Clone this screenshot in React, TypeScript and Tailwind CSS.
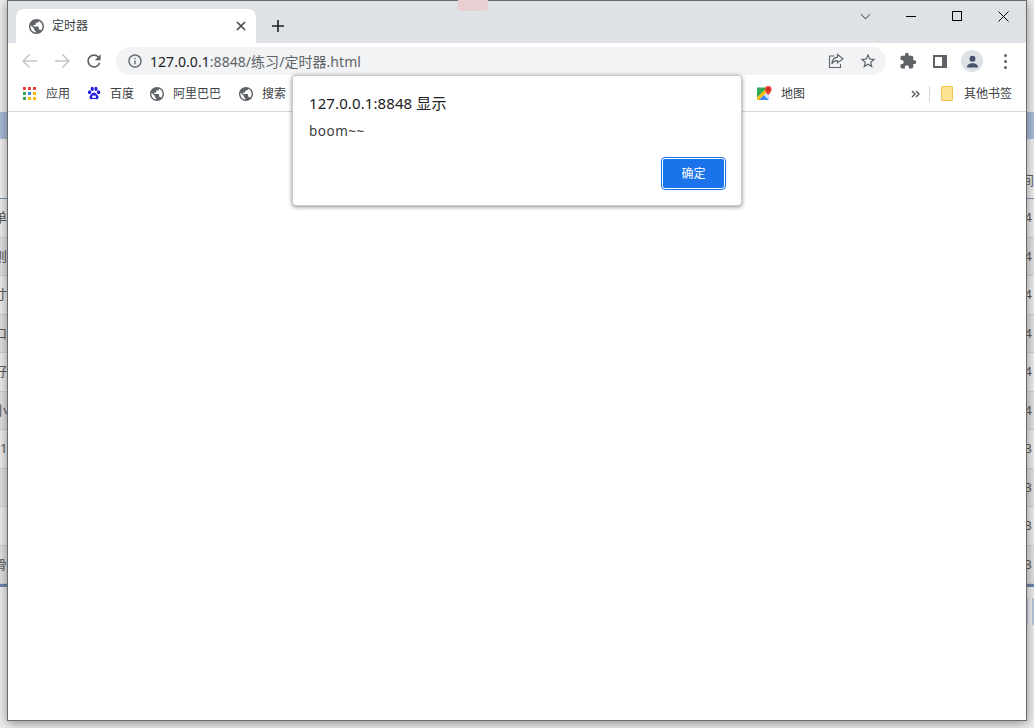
import type { ReactNode } from "react";

const fontStack = "font-['Noto_Sans','Noto_Sans_CJK_SC',sans-serif]";

const rows = [
  { left: "单", right: "4" },
  { left: "则", right: "4" },
  { left: "寸", right: "4" },
  { left: "口", right: "4" },
  { left: "好", right: "4" },
  { left: "小", right: "4" },
  { left: "1", right: "3" },
  { left: "", right: "3" },
  { left: "", right: "3" },
  { left: "骨", right: "3" },
];

function Globe({ className }: { className?: string }) {
  return (
    <svg viewBox="2 2 20 20" className={className} fill="#5f6368">
      <path d="M12 2C6.48 2 2 6.48 2 12s4.48 10 10 10 10-4.48 10-10S17.52 2 12 2zm-1 17.93c-3.95-.49-7-3.85-7-7.93 0-.62.08-1.21.21-1.79L9 15v1c0 1.1.9 2 2 2v1.93zm6.9-2.54c-.26-.81-1-1.39-1.9-1.39h-1v-3c0-.55-.45-1-1-1H8v-2h2c.55 0 1-.45 1-1V7h2c1.1 0 2-.9 2-2v-.41c2.93 1.19 5 4.06 5 7.41 0 2.08-.8 3.97-2.1 5.39z" />
    </svg>
  );
}

function AppsIcon() {
  const colors = ["#ea4335", "#ea4335", "#ea4335", "#34a853", "#4285f4", "#fbbc05", "#34a853", "#fbbc05", "#fbbc05"];
  return (
    <span className="grid grid-cols-3 gap-[2px] w-[13px] h-[13px]">
      {colors.map((c, i) => (
        <span key={i} className="w-[3px] h-[3px]" style={{ backgroundColor: c }} />
      ))}
    </span>
  );
}

function BaiduIcon() {
  return (
    <svg viewBox="0 0 16 16" className="w-[14px] h-[15px]" fill="#2319dc">
      <ellipse cx="3" cy="6.5" rx="1.9" ry="2.3" />
      <ellipse cx="6" cy="2.8" rx="1.8" ry="2.4" />
      <ellipse cx="10.2" cy="2.8" rx="1.8" ry="2.4" />
      <ellipse cx="13.2" cy="6.5" rx="1.9" ry="2.3" />
      <path d="M8 6.8c-2 0-2.6 1.8-3.8 3-1.3 1.2-1.6 2.2-1.2 3.3.5 1.3 1.8 1.6 3 1.3 1.4-.3 2.6-.3 4 0 1.2.3 2.5 0 3-1.3.4-1.1.1-2.1-1.2-3.3C10.6 8.6 10 6.8 8 6.8z" />
      <rect x="5.8" y="10.2" width="4.4" height="3" rx="1.2" fill="#fff" />
    </svg>
  );
}

function MapsIcon() {
  return (
    <svg viewBox="0 0 16 16" className="w-[15px] h-[15px]">
      <path d="M0 1.5h11L0 12.5z" fill="#34a853" />
      <path d="M0 12.5 11 1.5h1.5v3L2 15H0z" fill="#fbbc05" />
      <path d="M2 15l5.5-5.5 5.5 5.5z" fill="#4285f4" />
      <path d="M7.5 9.5l2.3-2.3 3.2 3.6V15z" fill="#d2e3fc" />
      <path d="M12 0a3.6 3.6 0 0 0-3.6 3.6c0 2.5 3.6 5.9 3.6 5.9s3.6-3.4 3.6-5.9A3.6 3.6 0 0 0 12 0z" fill="#ea4335" />
      <circle cx="12" cy="3.6" r="1.3" fill="#a52714" />
    </svg>
  );
}

function Bookmark({ icon, label, className }: { icon: ReactNode; label: string; className?: string }) {
  return (
    <div className={`flex items-center gap-[9px] ${className ?? ""}`}>
      <span className="w-[15px] flex items-center justify-center">{icon}</span>
      <span className="text-[12px] text-[#3c4043] whitespace-nowrap">{label}</span>
    </div>
  );
}

function BackgroundPage() {
  return (
    <div className="pt-[112px] text-[13px] text-[#5a5a5a]">
      <div className="h-[27px] bg-[#a9bcd9]" />
      <div className="h-[60px] bg-[#efefef] border-b border-[#7f94bb] flex items-end justify-end pb-[10px] pr-[1px]">
        <span className="leading-4 mr-[-1px]">间</span>
      </div>
      {rows.map((row, i) => (
        <div
          key={i}
          className={`h-[38.5px] flex items-center justify-between border-b border-[#cfcfcf] overflow-hidden ${i % 2 === 0 ? "bg-[#ececec]" : "bg-[#e0e0e0]"}`}
        >
          <span className={row.left === "1" ? "ml-0" : "ml-[-6px]"}>{row.left}</span>
          <span className="mr-[2px]">{row.right}</span>
        </div>
      ))}
      <div className="h-[3px] bg-[#6d86b0]" />
      <div className="flex justify-end pt-[11px]">
        <div className="w-[2px] h-[27px] bg-[#b9c6de] mr-[4px]" />
        <div className="w-[2px] h-[27px] bg-[#b9c6de]" />
      </div>
    </div>
  );
}

function TabStrip() {
  return (
    <div className="h-[42px] bg-[#dee1e6] flex items-end pl-[8px] shrink-0">
      <div className="w-[240px] h-[34px] bg-white rounded-t-[8px] flex items-center pl-[13px] pr-[10px]">
        <Globe className="w-[15px] h-[15px]" />
        <span className="ml-[8px] text-[12px] text-[#3c4043] flex-1">定时器</span>
        <svg viewBox="0 0 10 10" className="w-[10px] h-[10px]" stroke="#45484c" strokeWidth="1.7" fill="none">
          <path d="M1 1l8 8M9 1l-8 8" />
        </svg>
      </div>
      <div className="w-[44px] h-[34px] flex items-center justify-center">
        <svg viewBox="0 0 12 12" className="w-[12px] h-[12px]" stroke="#202124" strokeWidth="1.6" fill="none">
          <path d="M6 0v12M0 6h12" />
        </svg>
      </div>
      <div className="flex-1" />
      <div className="h-[30px] self-start flex items-center">
        <div className="w-[46px] flex justify-center">
          <svg viewBox="0 0 12 7" className="w-[11px] h-[7px]" stroke="#202124" strokeWidth="1" fill="none">
            <path d="M1 1l5 5 5-5" />
          </svg>
        </div>
        <div className="w-[46px] flex justify-center">
          <div className="w-[10px] h-px bg-black" />
        </div>
        <div className="w-[46px] flex justify-center">
          <div className="w-[10px] h-[10px] border border-black" />
        </div>
        <div className="w-[46px] flex justify-center">
          <svg viewBox="0 0 11 11" className="w-[11px] h-[11px]" stroke="#000" strokeWidth="1" fill="none">
            <path d="M.5.5l10 10M10.5.5l-10 10" />
          </svg>
        </div>
      </div>
    </div>
  );
}

function Toolbar() {
  return (
    <div className="h-[33px] bg-white flex items-start relative shrink-0 pt-[4px]">
      <div className="w-[108px] flex items-center h-[28px] pl-[14px] shrink-0">
        <svg viewBox="0 0 16 16" className="w-[16px] h-[16px]" stroke="#c1c4c9" strokeWidth="1.5" fill="none">
          <path d="M15 8H1.5M7.5 1.5 1 8l6.5 6.5" />
        </svg>
        <svg viewBox="0 0 16 16" className="w-[16px] h-[16px] ml-[16px]" stroke="#c1c4c9" strokeWidth="1.5" fill="none">
          <path d="M1 8h13.5M8.5 1.5 15 8l-6.5 6.5" />
        </svg>
        <svg viewBox="0 0 24 24" className="w-[20px] h-[20px] ml-[14px]" fill="#5f6368">
          <path d="M17.65 6.35A7.958 7.958 0 0 0 12 4c-4.42 0-7.99 3.58-7.99 8s3.57 8 7.99 8c3.73 0 6.84-2.55 7.73-6h-2.08A5.99 5.99 0 0 1 12 18c-3.31 0-6-2.69-6-6s2.69-6 6-6c1.66 0 3.14.69 4.22 1.78L13 11h7V4l-2.35 2.35z" />
        </svg>
      </div>
      <div className="w-[770px] h-[28px] bg-[#f1f3f4] rounded-full flex items-center pl-[11px] pr-[9px] shrink-0">
        <svg viewBox="0 0 24 24" className="w-[16px] h-[16px]" fill="#5f6368">
          <path d="M11 7h2v2h-2zm0 4h2v6h-2zm1-9C6.48 2 2 6.48 2 12s4.48 10 10 10 10-4.48 10-10S17.52 2 12 2zm0 18c-4.41 0-8-3.59-8-8s3.59-8 8-8 8 3.59 8 8-3.59 8-8 8z" />
        </svg>
        <span className="ml-[7px] text-[14px] tracking-[0.05px] whitespace-nowrap text-[#5f6368]">
          <span className="text-[#202124]">127.0.0.1</span>:8848/练习/定时器.html
        </span>
        <div className="flex-1" />
        <svg viewBox="0 0 16 16" className="w-[16px] h-[16px]" stroke="#5f6368" strokeWidth="1.1" fill="none">
          <path d="M6.5 3H1.5v11.5h11V11" />
          <path d="M9.5 1.5 15 5.8 9.5 10V7.6C7 7.6 5 8.7 3.8 11 4 7.5 6 4.6 9.5 4.1z" />
        </svg>
        <svg viewBox="0 0 24 24" className="w-[18px] h-[18px] ml-[15px]" fill="#5f6368">
          <path d="M22 9.24l-7.19-.62L12 2 9.19 8.63 2 9.24l5.46 4.73L5.82 21 12 17.27 18.18 21l-1.63-7.03L22 9.24zM12 15.4l-3.76 2.27 1-4.28-3.32-2.88 4.38-.38L12 6.1l1.71 4.04 4.38.38-3.32 2.88 1 4.28L12 15.4z" />
        </svg>
      </div>
      <div className="flex items-center h-[28px] pl-[13px]">
        <svg viewBox="0 0 24 24" className="w-[18px] h-[18px]" fill="#5f6368">
          <path d="M20.5 11H19V7c0-1.1-.9-2-2-2h-4V3.5a2.5 2.5 0 0 0-5 0V5H4c-1.1 0-1.99.9-1.99 2v3.8H3.5c1.49 0 2.7 1.21 2.7 2.7s-1.21 2.7-2.7 2.7H2V20c0 1.1.9 2 2 2h3.8v-1.5c0-1.49 1.21-2.7 2.7-2.7s2.7 1.21 2.7 2.7V22H17c1.1 0 2-.9 2-2v-4h1.5a2.5 2.5 0 0 0 0-5z" />
        </svg>
        <div className="w-[14px] h-[13px] ml-[16px] border-[2px] border-r-[5px] border-[#5f6368] bg-white" />
        <div className="w-[22px] h-[22px] ml-[14px] rounded-full bg-[#dee1e6] flex items-center justify-center">
          <svg viewBox="0 0 14 14" className="w-[13px] h-[13px]" fill="#47536b">
            <circle cx="7" cy="4" r="3.2" />
            <path d="M1 13.5c0-3 3-4.5 6-4.5s6 1.5 6 4.5z" />
          </svg>
        </div>
        <div className="ml-[21px] flex flex-col gap-[3px]">
          <span className="w-[3px] h-[3px] rounded-full bg-[#5f6368]" />
          <span className="w-[3px] h-[3px] rounded-full bg-[#5f6368]" />
          <span className="w-[3px] h-[3px] rounded-full bg-[#5f6368]" />
        </div>
      </div>
    </div>
  );
}

function BookmarkBar() {
  return (
    <div className="h-[36px] bg-white border-b border-[#d3d5d8] flex items-center pl-[14px] pr-[14px] shrink-0">
      <Bookmark icon={<AppsIcon />} label="应用" />
      <Bookmark icon={<BaiduIcon />} label="百度" className="ml-[16px]" />
      <Bookmark icon={<Globe className="w-[14px] h-[14px]" />} label="阿里巴巴" className="ml-[15px]" />
      <Bookmark icon={<Globe className="w-[14px] h-[14px]" />} label="搜索" className="ml-[17px]" />
      <div className="flex-1" />
      <Bookmark icon={<MapsIcon />} label="地图" className="mr-[1px]" />
      <span className="ml-[105px] w-[10px] flex justify-center">
        <svg viewBox="0 0 9 8" className="w-[9px] h-[8px]" stroke="#5f6368" strokeWidth="1.5" fill="none">
          <path d="M1 1l3 3-3 3M5 1l3 3-3 3" />
        </svg>
      </span>
      <span className="ml-[8px] w-px h-[16px] bg-[#d3d5d8]" />
      <span className="ml-[11px] w-[12px] h-[15px] bg-[#fde293] border border-[#f0c34e] rounded-[1px]" />
      <span className="ml-[11px] text-[12px] text-[#3c4043] whitespace-nowrap">其他书签</span>
    </div>
  );
}

function AlertDialog() {
  return (
    <div className="absolute left-[284px] top-[74px] w-[450px] h-[131px] bg-white rounded-[4px] border border-[#c9c9c9] shadow-[0_1px_4px_rgba(0,0,0,0.45)] px-[16px] flex flex-col">
      <div className="mt-[16px] text-[15px] tracking-[0.1px] leading-[22px] text-[#202124]">127.0.0.1:8848 显示</div>
      <div className="mt-[8px] text-[13.5px] tracking-[0.5px] leading-[18px] text-[#3c4043]">boom~~</div>
      <div className="flex justify-end mt-[18px]">
        <button className="w-[63px] h-[31px] rounded-[3px] bg-[#1a73e8] border border-white outline outline-[1px] outline-[#1a73e8] outline-offset-0 text-white text-[12px]">
          确定
        </button>
      </div>
    </div>
  );
}

export default function App() {
  return (
    <div className={`relative w-[1034px] h-[728px] overflow-hidden bg-[#ececec] ${fontStack}`}>
      <BackgroundPage />
      <div className="absolute left-[7px] top-0 w-[1020px] h-[721px] border border-[#6b6b6b] bg-white shadow-[0_2px_10px_rgba(0,0,0,0.4)] flex flex-col">
        <TabStrip />
        <Toolbar />
        <BookmarkBar />
        <div className="flex-1 bg-white" />
        <AlertDialog />
      </div>
      <div className="absolute left-[458px] top-0 w-[30px] h-[11px] rounded-b-[4px] bg-[#e8cfd2]" />
    </div>
  );
}
